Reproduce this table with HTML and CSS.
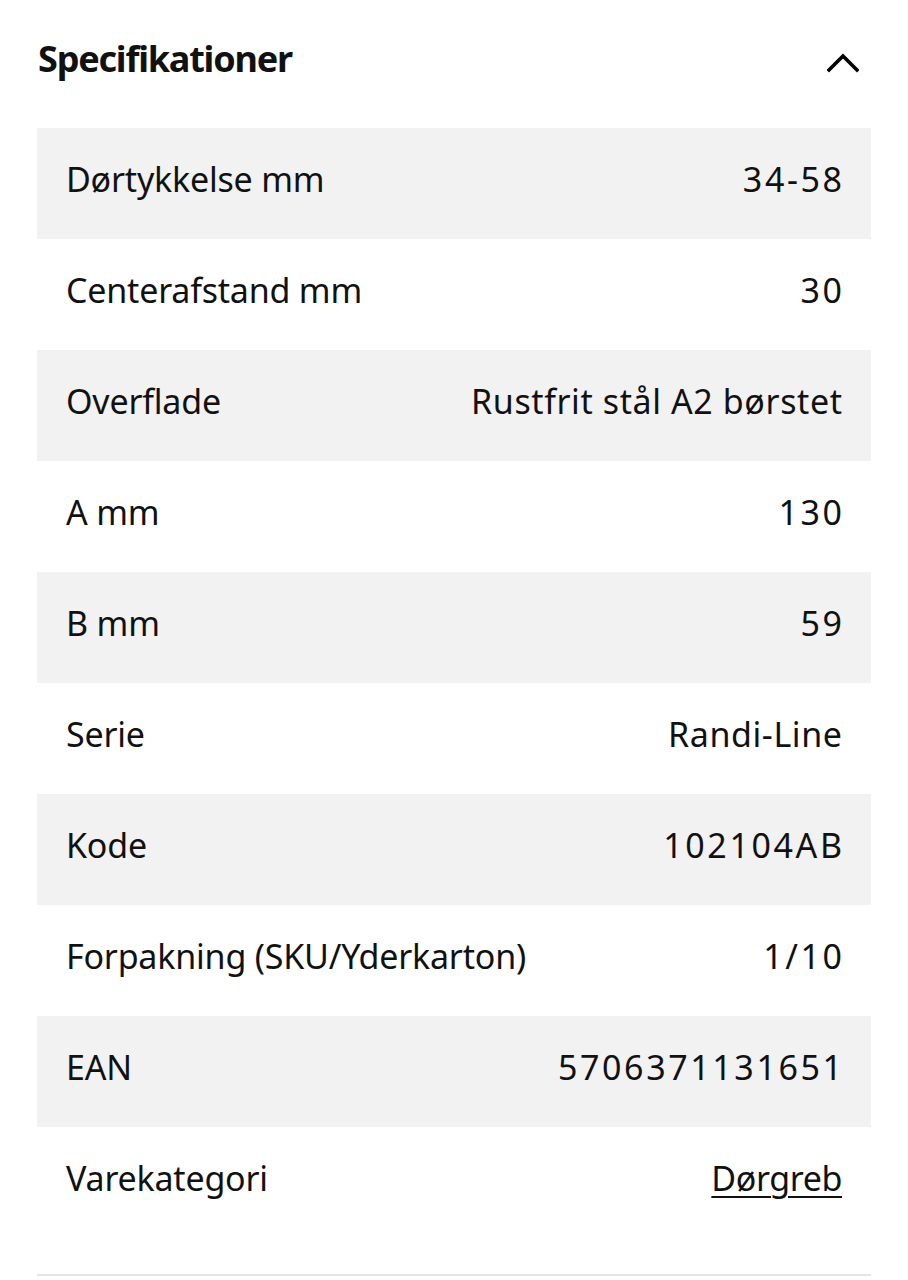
FILE: index.html
```html
<!DOCTYPE html>
<html lang="da">
<head>
<meta charset="utf-8">
<link rel="stylesheet" href="styles.css">
</head>
<body>
<section class="specs">
  <header class="specs-head">
    <h2 class="specs-title">Specifikationer</h2>
    <svg class="chevron" width="32" height="20" viewBox="0 0 32 20"><path d="M2 17 L16 3 L30 17" fill="none" stroke="#000" stroke-width="3.6" stroke-linecap="square"/></svg>
  </header>
  <div class="specs-table">
    <div class="row"><span class="label">Dørtykkelse mm</span><span class="value num">34-58</span></div>
    <div class="row"><span class="label">Centerafstand mm</span><span class="value num">30</span></div>
    <div class="row"><span class="label">Overflade</span><span class="value">Rustfrit stål A2 børstet</span></div>
    <div class="row"><span class="label">A mm</span><span class="value num">130</span></div>
    <div class="row"><span class="label">B mm</span><span class="value num">59</span></div>
    <div class="row"><span class="label">Serie</span><span class="value">Randi-Line</span></div>
    <div class="row"><span class="label">Kode</span><span class="value num">102104AB</span></div>
    <div class="row"><span class="label">Forpakning (SKU/Yderkarton)</span><span class="value num">1/10</span></div>
    <div class="row"><span class="label">EAN</span><span class="value num">5706371131651</span></div>
    <div class="row"><span class="label">Varekategori</span><a class="value link" href="#">Dørgreb</a></div>
  </div>
  <div class="specs-end"></div>
</section>
</body>
</html>
```
FILE: styles.css
```css
html, body { margin: 0; padding: 0; background: #fff; }
body { font-family: "Noto Sans", "DejaVu Sans", sans-serif; color: #111; }
.specs { padding: 0 37px; }
.specs-head { height: 128px; display: flex; align-items: center; justify-content: space-between; }
.specs-title { margin: 0 0 12px 1px; font-size: 36px; font-weight: 700; letter-spacing: -1.2px; }
.chevron { margin-right: 12px; margin-bottom: 2px; }
.specs-table { display: flex; flex-direction: column; }
.row { height: 111px; box-sizing: border-box; display: flex; align-items: center; justify-content: space-between; padding: 0 29px 10px; font-size: 34px; }
.row:nth-child(odd) { background: #f2f2f2; }
.label { letter-spacing: -0.2px; }
.value { letter-spacing: 0.6px; margin-right: -0.6px; }
.value.num { letter-spacing: 2.6px; margin-right: -2.6px; }
.link { color: #111; letter-spacing: -0.4px; margin-right: 0; text-decoration: underline; text-underline-offset: 5px; text-decoration-thickness: 2px; }
.specs-end { margin-top: 36px; border-top: 2px solid #e4e4e4; }
```
